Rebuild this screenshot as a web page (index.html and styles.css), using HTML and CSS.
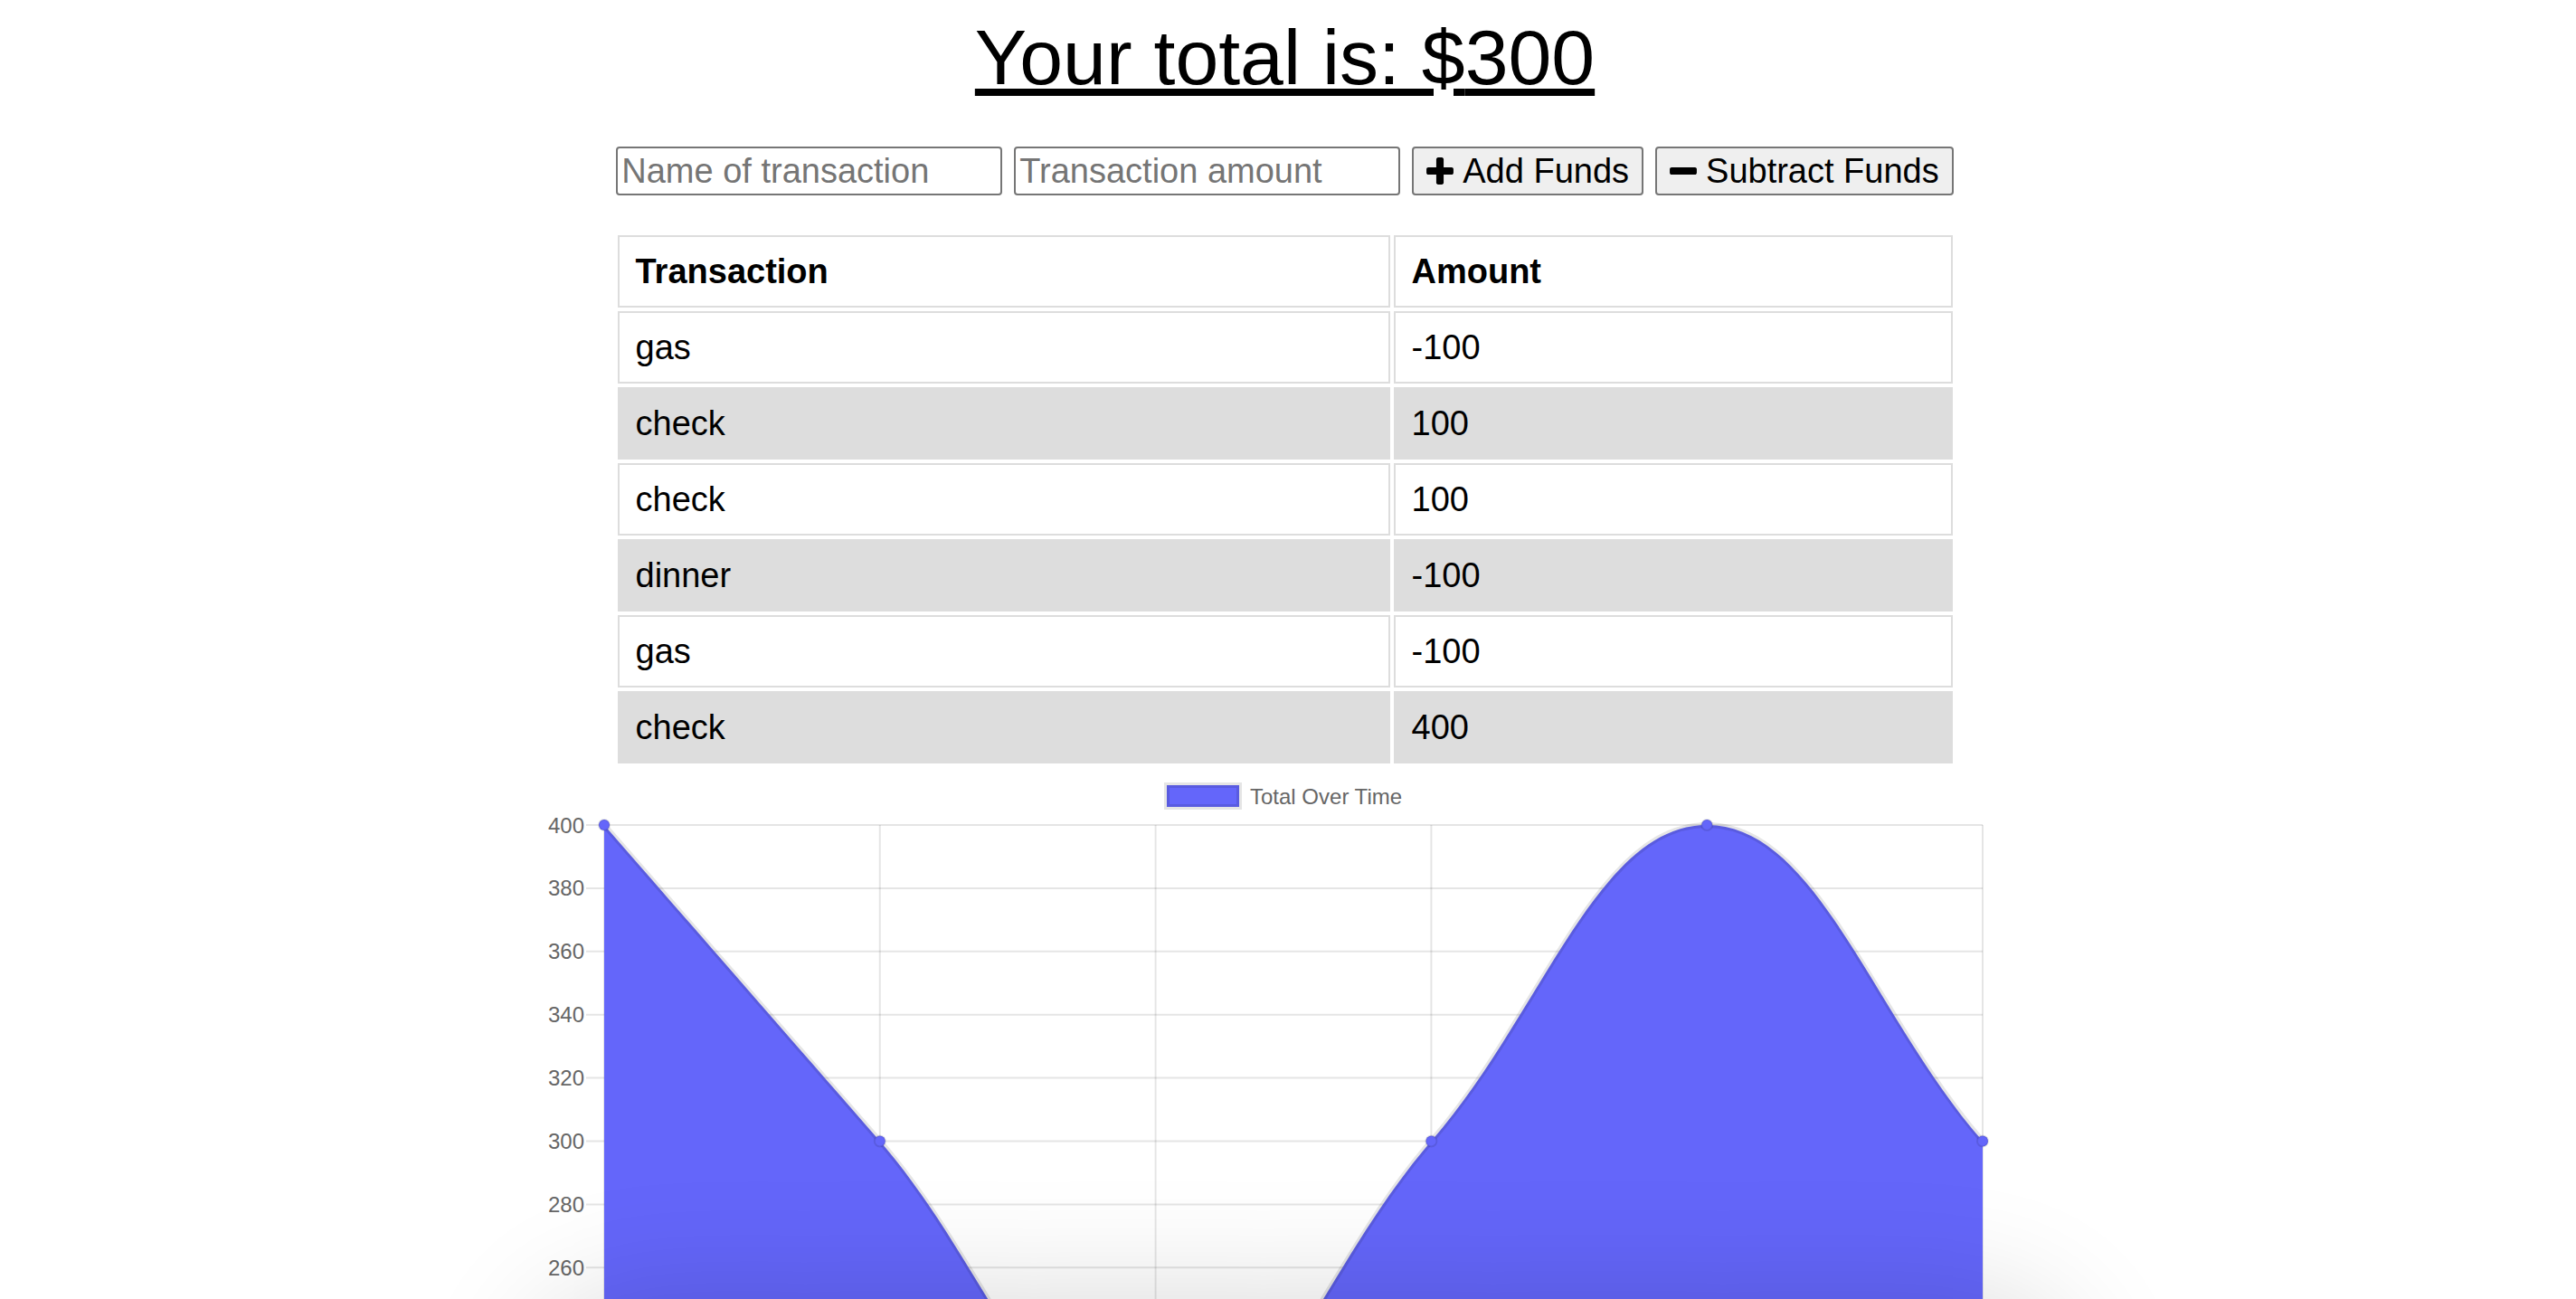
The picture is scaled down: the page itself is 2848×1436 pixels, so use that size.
FILE: index.html
```html
<!DOCTYPE html>
<html lang="en">
<head>
<meta charset="utf-8">
<title>Budget Tracker</title>
<link rel="stylesheet" href="styles.css">
</head>
<body>
  <div class="total">
    <h1 class="total-title">Your total is: $<span id="total">300</span></h1>
  </div>

  <div class="form">
    <input type="text" id="t-name" class="field" placeholder="Name of transaction">
    <input type="number" min="0" id="t-amount" class="field" placeholder="Transaction amount">
    <button id="add-btn" class="btn">
      <svg class="fa" viewBox="0 0 1408 1792" aria-hidden="true"><path d="M1408 800v192q0 40-28 68t-68 28h-416v416q0 40-28 68t-68 28h-192q-40 0-68-28t-28-68v-416h-416q-40 0-68-28t-28-68v-192q0-40 28-68t68-28h416v-416q0-40 28-68t68-28h192q40 0 68 28t28 68v416h416q40 0 68 28t28 68z"/></svg>
      <span>Add Funds</span>
    </button>
    <button id="sub-btn" class="btn">
      <svg class="fa" viewBox="0 0 1408 1792" aria-hidden="true"><path d="M1408 800v192q0 40-28 68t-68 28h-1216q-40 0-68-28t-28-68v-192q0-40 28-68t68-28h1216q40 0 68 28t28 68z"/></svg>
      <span>Subtract Funds</span>
    </button>
  </div>

  <table class="transactions">
    <thead>
      <tr>
        <th class="col-name">Transaction</th>
        <th class="col-amount">Amount</th>
      </tr>
    </thead>
    <tbody id="tbody">
      <tr><td>gas</td><td>-100</td></tr>
      <tr><td>check</td><td>100</td></tr>
      <tr><td>check</td><td>100</td></tr>
      <tr><td>dinner</td><td>-100</td></tr>
      <tr><td>gas</td><td>-100</td></tr>
      <tr><td>check</td><td>400</td></tr>
    </tbody>
  </table>

  <div class="chart-wrap">
    <svg class="chart" viewBox="0 0 1741 588" width="1741" height="588" role="img" aria-label="Total Over Time">
      <g class="legend">
        <rect x="740" y="20" width="80" height="24" class="legend-box"/>
        <text x="832" y="40.5" class="chart-text">Total Over Time</text>
      </g>
      <g class="grid">
        <line x1="98" y1="64" x2="1642" y2="64"/>
        <line x1="98" y1="133.9" x2="1642" y2="133.9"/>
        <line x1="98" y1="203.8" x2="1642" y2="203.8"/>
        <line x1="98" y1="273.7" x2="1642" y2="273.7"/>
        <line x1="98" y1="343.6" x2="1642" y2="343.6"/>
        <line x1="98" y1="413.5" x2="1642" y2="413.5"/>
        <line x1="98" y1="483.4" x2="1642" y2="483.4"/>
        <line x1="98" y1="553.3" x2="1642" y2="553.3"/>
        <line x1="118" y1="64" x2="118" y2="588"/>
        <line x1="422.8" y1="64" x2="422.8" y2="588"/>
        <line x1="727.6" y1="64" x2="727.6" y2="588"/>
        <line x1="1032.4" y1="64" x2="1032.4" y2="588"/>
        <line x1="1337.2" y1="64" x2="1337.2" y2="588"/>
        <line x1="1642" y1="64" x2="1642" y2="588"/>
      </g>
      <g class="y-labels">
        <text x="96" y="72.5" class="chart-text">400</text>
        <text x="96" y="142.4" class="chart-text">380</text>
        <text x="96" y="212.3" class="chart-text">360</text>
        <text x="96" y="282.2" class="chart-text">340</text>
        <text x="96" y="352.1" class="chart-text">320</text>
        <text x="96" y="422" class="chart-text">300</text>
        <text x="96" y="491.9" class="chart-text">280</text>
        <text x="96" y="561.8" class="chart-text">260</text>
      </g>
      <path class="area" d="M118,64 C239.9,203.8 300.9,273.7 422.8,413.5 C544.7,553.3 605.7,763 727.6,763 C849.5,763 910.5,553.3 1032.4,413.5 C1154.3,273.7 1215.3,64 1337.2,64 C1459.1,64 1520.1,273.7 1642,413.5 L1642,763 L118,763 Z"/>
      <path class="line" d="M118,64 C239.9,203.8 300.9,273.7 422.8,413.5 C544.7,553.3 605.7,763 727.6,763 C849.5,763 910.5,553.3 1032.4,413.5 C1154.3,273.7 1215.3,64 1337.2,64 C1459.1,64 1520.1,273.7 1642,413.5"/>
      <g class="points">
        <circle cx="118" cy="64" r="6"/>
        <circle cx="422.8" cy="413.5" r="6"/>
        <circle cx="1032.4" cy="413.5" r="6"/>
        <circle cx="1337.2" cy="64" r="6"/>
        <circle cx="1642" cy="413.5" r="6"/>
      </g>
    </svg>
  </div>

  <div class="bottom-shade" aria-hidden="true"></div>
</body>
</html>
```

FILE: styles.css
```css
html {
  overflow: hidden;
  background: #ffffff;
}

body {
  margin: 0;
  padding-right: 7px;
  font-family: "Liberation Sans", Arial, Helvetica, sans-serif;
  color: #000000;
  background: #ffffff;
}

.total-title {
  margin: 15px 0 0;
  text-align: center;
  font-size: 86px;
  font-weight: 400;
  line-height: 96px;
  text-decoration: underline;
}

.form {
  display: flex;
  justify-content: center;
  gap: 13px;
  margin-top: 51px;
  height: 54px;
}

.field {
  box-sizing: border-box;
  width: 427px;
  height: 54px;
  margin: 0;
  padding: 2px 4px;
  border: 2px solid #767676;
  border-radius: 4px;
  font-family: "Liberation Sans", Arial, Helvetica, sans-serif;
  font-size: 38px;
  color: #000000;
  background: #ffffff;
}

.field::placeholder {
  color: #757575;
}

.btn {
  box-sizing: border-box;
  display: inline-flex;
  align-items: center;
  gap: 10px;
  height: 54px;
  margin: 0;
  padding: 0 14px;
  border: 2px solid #767676;
  border-radius: 4px;
  background: #efefef;
  color: #000000;
  font-family: "Liberation Sans", Arial, Helvetica, sans-serif;
  font-size: 38px;
  line-height: 44px;
}

.fa {
  width: 30px;
  height: 38px;
  fill: #000000;
  flex: none;
}

.transactions {
  box-sizing: border-box;
  width: 1484px;
  margin: 40px auto 0;
  table-layout: fixed;
  border-collapse: separate;
  border-spacing: 4px;
}

.transactions th,
.transactions td {
  box-sizing: border-box;
  height: 80px;
  padding: 16px 18px;
  border: 2px solid #dddddd;
  text-align: left;
  font-size: 38px;
  line-height: 44px;
  background: #ffffff;
}

.transactions th {
  font-weight: 700;
}

.col-name {
  width: 854px;
}

.col-amount {
  width: 618px;
}

.transactions tbody tr:nth-child(even) td {
  background: #dddddd;
}

.chart-wrap {
  width: 1741px;
  margin: 0 auto;
}

.chart {
  display: block;
  overflow: hidden;
}

.chart-text {
  font-family: "Liberation Sans", Arial, Helvetica, sans-serif;
  font-size: 24px;
  fill: #666666;
}

.y-labels .chart-text {
  text-anchor: end;
}

.legend-box {
  fill: #6466fa;
  stroke: rgba(0, 0, 0, 0.1);
  stroke-width: 6;
}

.grid line {
  stroke: rgba(0, 0, 0, 0.1);
  stroke-width: 2;
}

.area {
  fill: #6466fa;
}

.line {
  fill: none;
  stroke: rgba(0, 0, 0, 0.1);
  stroke-width: 6;
}

.points circle {
  fill: #6466fa;
  stroke: rgba(0, 0, 0, 0.1);
  stroke-width: 2;
}

.bottom-shade {
  position: fixed;
  left: 620px;
  top: 1468px;
  width: 1640px;
  height: 300px;
  border-radius: 80px;
  background: #ffffff;
  box-shadow: 0 0 140px 30px rgba(0, 0, 0, 0.16);
  pointer-events: none;
}
```
